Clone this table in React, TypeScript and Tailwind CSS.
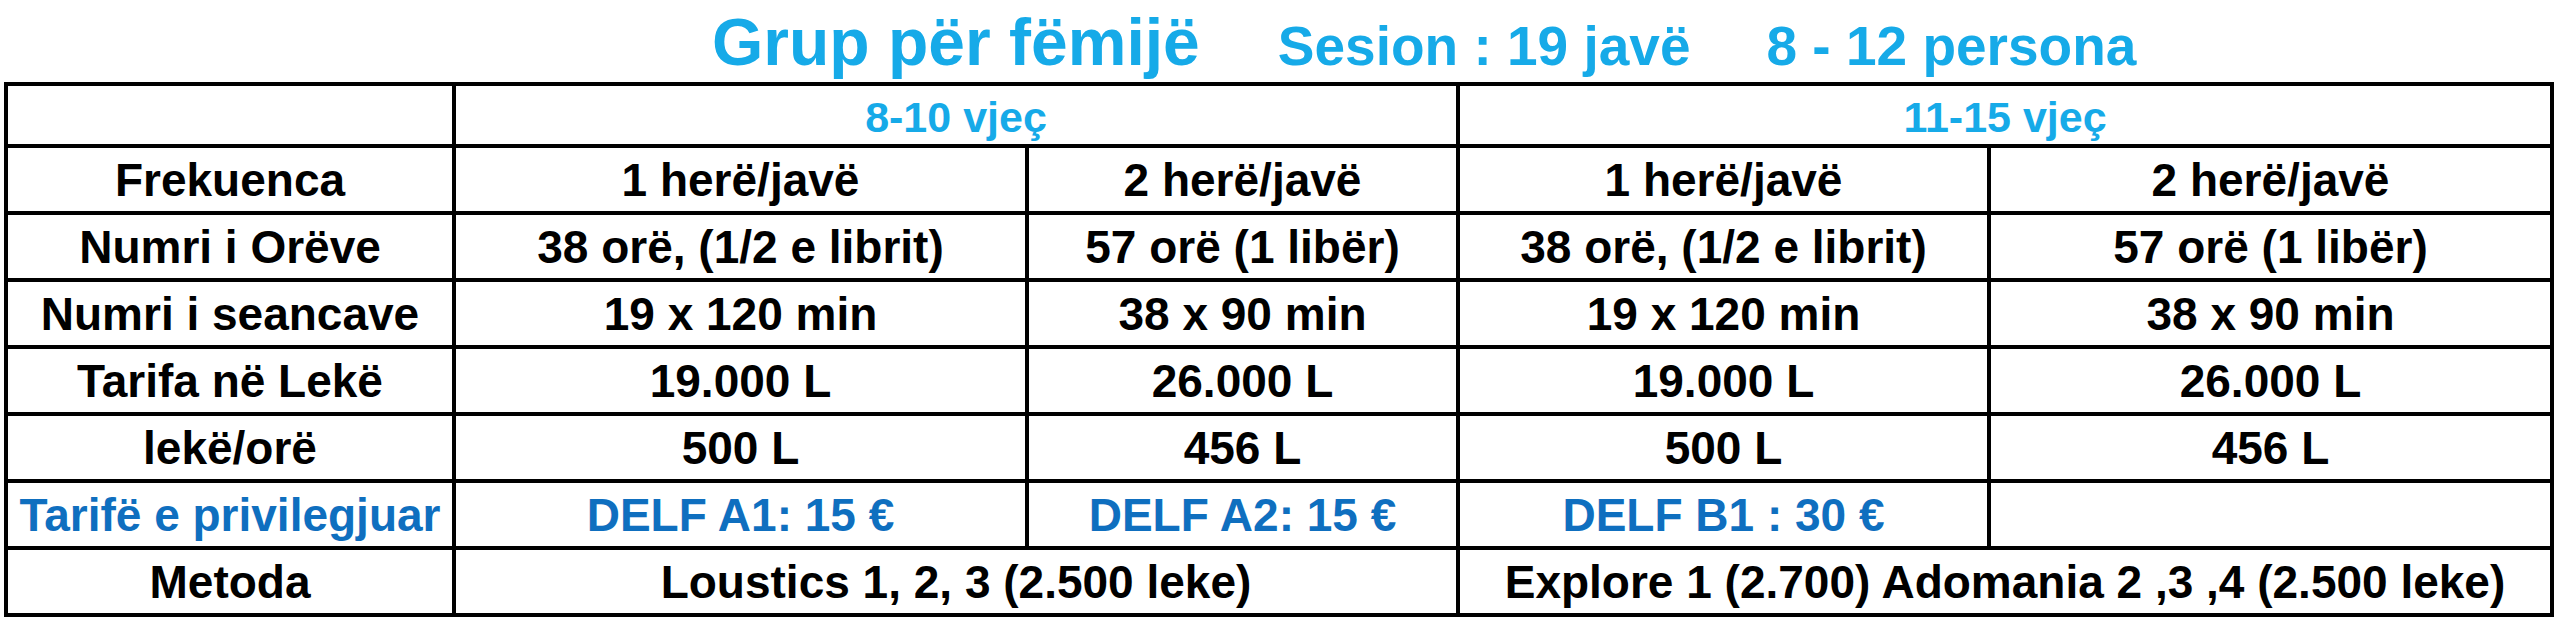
import React from 'react';

const cell = 'bg-white flex items-center justify-center leading-none whitespace-nowrap';
const body = 'text-[46px] font-bold text-black';
const blue = 'text-[46px] font-bold text-[#0f6fbf]';

const rows = [
  ['Frekuenca', '1 herë/javë', '2 herë/javë', '1 herë/javë', '2 herë/javë'],
  ['Numri i Orëve', '38 orë, (1/2 e librit)', '57 orë (1 libër)', '38 orë, (1/2 e librit)', '57 orë (1 libër)'],
  ['Numri i seancave', '19 x 120 min', '38 x 90 min', '19 x 120 min', '38 x 90 min'],
  ['Tarifa në Lekë', '19.000 L', '26.000 L', '19.000 L', '26.000 L'],
  ['lekë/orë', '500 L', '456 L', '500 L', '456 L'],
];

export default function App() {
  return (
    <div className="w-[2560px] h-[622px] bg-white font-['Liberation_Sans',Arial,sans-serif]">
      {/* Title */}
      <div className="h-[82px] pt-[9px] pl-[712px] flex items-baseline text-[#16aae8] font-bold leading-none whitespace-nowrap">
        <span className="text-[66px]">Grup për fëmijë</span>
        <span className="text-[55px] ml-[78px]">Sesion : 19 javë</span>
        <span className="text-[55px] ml-[76px]">8 - 12 persona</span>
      </div>

      {/* Table */}
      <div className="ml-[4px] w-[2550px] border-4 border-black bg-black grid grid-cols-[444px_569px_427px_527px_559px] grid-rows-[58px_repeat(7,63px)] gap-[4px]">
        <div className={cell} />
        <div className={`${cell} col-span-2 pt-[4px] text-[43px] font-bold text-[#16aae8]`}>8-10 vjeç</div>
        <div className={`${cell} col-span-2 pt-[4px] text-[43px] font-bold text-[#16aae8]`}>11-15 vjeç</div>

        {rows.map((r) =>
          r.map((t, i) => (
            <div key={r[0] + i} className={`${cell} ${body}`}>
              {t}
            </div>
          ))
        )}

        <div className={`${cell} ${blue}`}>Tarifë e privilegjuar</div>
        <div className={`${cell} ${blue}`}>DELF A1: 15 €</div>
        <div className={`${cell} ${blue}`}>DELF A2: 15 €</div>
        <div className={`${cell} ${blue}`}>DELF B1 : 30 €</div>
        <div className={cell} />

        <div className={`${cell} ${body}`}>Metoda</div>
        <div className={`${cell} ${body} col-span-2`}>Loustics 1, 2, 3 (2.500 leke)</div>
        <div className={`${cell} ${body} col-span-2`}>Explore 1 (2.700) Adomania 2 ,3 ,4 (2.500 leke)</div>
      </div>
    </div>
  );
}
